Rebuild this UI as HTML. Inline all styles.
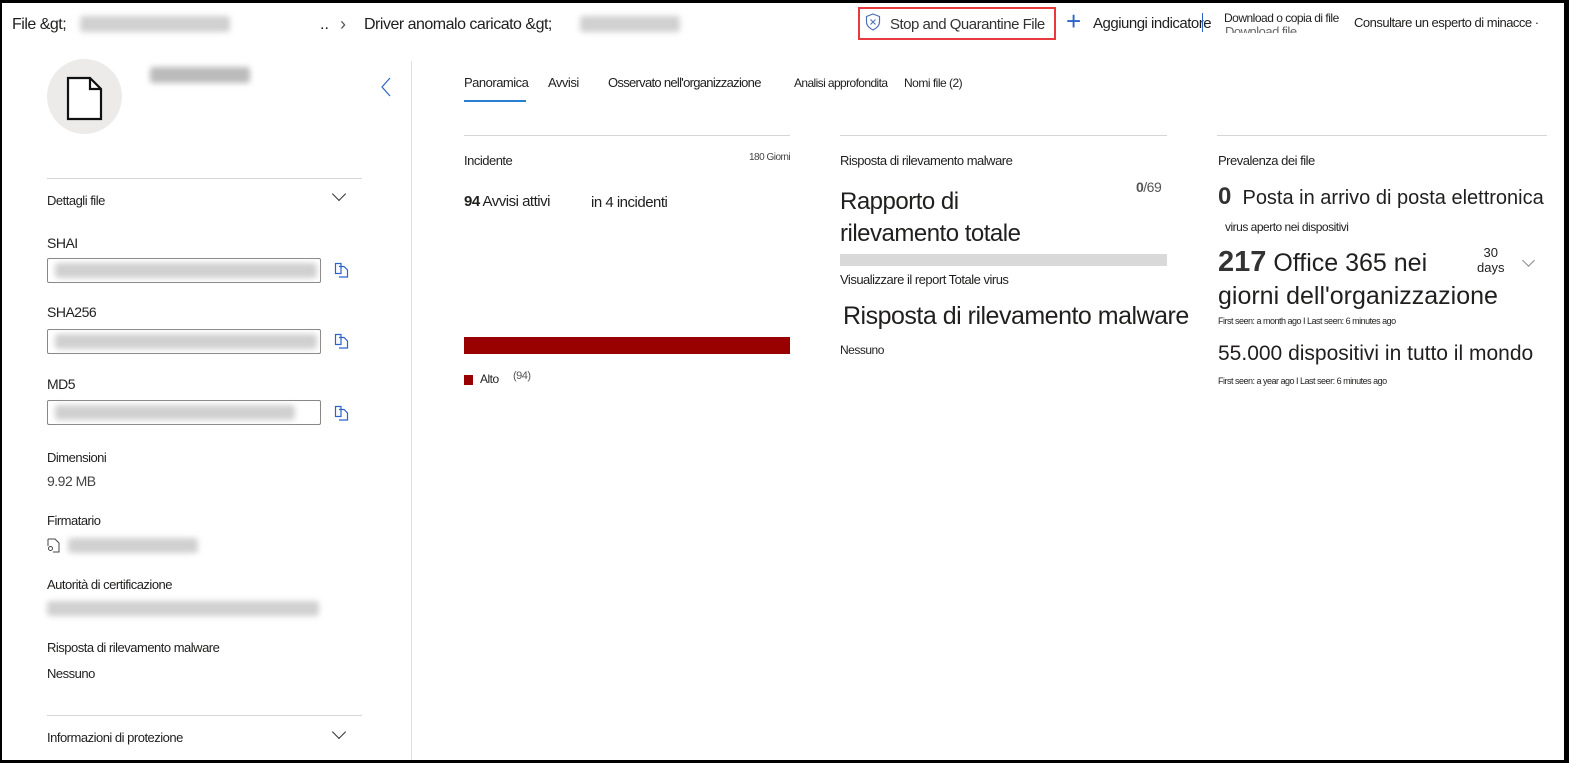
<!DOCTYPE html>
<html><head><meta charset="utf-8"><style>
*{margin:0;padding:0;box-sizing:border-box}
body{width:1569px;height:763px;overflow:hidden;background:#000;font-family:"Liberation Sans",sans-serif;color:#201f1e;position:relative}
#pg{position:absolute;left:2px;top:3px;width:1562px;height:757px;background:#fff;overflow:hidden}
.a{position:absolute;white-space:nowrap}
.c{letter-spacing:-0.5px}
.blur{position:absolute;background:#d0d0d0;filter:blur(3px);border-radius:3px}
.box{position:absolute;border:1px solid #8a8886;border-radius:2px;height:25px;width:274px;left:45px}
.hr{position:absolute;height:1px;background:#d6d6d6}
.chev{position:absolute;width:10px;height:10px;border-right:1.3px solid #333;border-bottom:1.3px solid #333;transform:rotate(45deg)}
</style></head><body><div id="pg">
<div class="a c" style="left:10px;top:13px;font-size:16px">File &amp;gt;</div>
<div class="blur" style="left:78px;top:13px;width:150px;height:16px"></div>
<div class="a" style="left:318px;top:13px;font-size:16px">..</div>
<div class="a" style="left:338px;top:11px;font-size:18px;color:#555">›</div>
<div class="a c" style="left:362px;top:13px;font-size:16px">Driver anomalo caricato &amp;gt;</div>
<div class="blur" style="left:578px;top:13px;width:100px;height:16px"></div>
<div class="a" style="left:856px;top:4px;width:198px;height:33px;border:2px solid #e8393e"></div>
<svg class="a" style="left:863px;top:10px" width="16" height="18" viewBox="0 0 16 18"><path d="M8 1 L14.5 3.5 V9 C14.5 13 11 15.5 8 17 C5 15.5 1.5 13 1.5 9 V3.5 Z" fill="none" stroke="#4c6fb8" stroke-width="1.2"/><path d="M5.5 6.5 L10.5 11.5 M10.5 6.5 L5.5 11.5" stroke="#4c6fb8" stroke-width="1.1"/></svg>
<div class="a c" style="left:888px;top:13px;font-size:15px;color:#333">Stop and Quarantine File</div>
<div class="a" style="left:1064px;top:3px;font-size:26px;font-weight:200;color:#2b64c8">+</div>
<div class="a c" style="left:1091px;top:12px;font-size:15px">Aggiungi indicatore</div>
<div class="a c" style="left:1223px;top:21px;font-size:13px;color:#666;height:9px;overflow:hidden">Download file</div>
<div class="a" style="left:1200px;top:10px;width:1px;height:19px;background:#2b64c8"></div>
<div class="a c" style="left:1222px;top:8px;font-size:12px">Download o copia di file</div>
<div class="a c" style="left:1352px;top:12px;font-size:13px">Consultare un esperto di minacce ·</div>
<div class="a" style="left:45px;top:56px;width:75px;height:75px;border-radius:50%;background:#edebe9"></div>
<svg class="a" style="left:64px;top:73px" width="38" height="45" viewBox="0 0 38 45"><path d="M2 2 H24 L35 13 V43 H2 Z" fill="#fff" stroke="#111" stroke-width="2.2"/><path d="M24 2 V13 H35" fill="none" stroke="#111" stroke-width="2.2"/></svg>
<div class="blur" style="left:148px;top:64px;width:100px;height:16px;background:#bbb"></div>
<svg class="a" style="left:378px;top:74px" width="12" height="20" viewBox="0 0 12 20"><path d="M10 1 L2 10 L10 19" fill="none" stroke="#2b64c8" stroke-width="1.2"/></svg>
<div class="a" style="left:409px;top:58px;width:1px;height:700px;background:#e1dfdd"></div>
<div class="hr" style="left:45px;top:175px;width:315px"></div>
<div class="a c" style="left:45px;top:190px;font-size:13px">Dettagli file</div>
<div class="chev" style="left:332px;top:186px"></div>
<div class="a c" style="left:45px;top:232px;font-size:14px">SHAI</div>
<div class="box" style="top:255px"></div><div class="blur" style="left:53px;top:260px;width:262px;height:15px"></div>
<div class="a c" style="left:45px;top:301px;font-size:14px">SHA256</div>
<div class="box" style="top:326px"></div><div class="blur" style="left:53px;top:331px;width:262px;height:15px"></div>
<div class="a c" style="left:45px;top:373px;font-size:14px">MD5</div>
<div class="box" style="top:397px"></div><div class="blur" style="left:53px;top:402px;width:240px;height:15px"></div>
<svg class="a" style="left:332px;top:259px" width="16" height="16" viewBox="0 0 16 16"><path d="M1.5 1.5 H7 V11.5 H1.5 Z M5 4.5 H10 L13.5 8 V15 H5" fill="none" stroke="#2b64c8" stroke-width="1.2"/></svg>
<svg class="a" style="left:332px;top:330px" width="16" height="16" viewBox="0 0 16 16"><path d="M1.5 1.5 H7 V11.5 H1.5 Z M5 4.5 H10 L13.5 8 V15 H5" fill="none" stroke="#2b64c8" stroke-width="1.2"/></svg>
<svg class="a" style="left:332px;top:402px" width="16" height="16" viewBox="0 0 16 16"><path d="M1.5 1.5 H7 V11.5 H1.5 Z M5 4.5 H10 L13.5 8 V15 H5" fill="none" stroke="#2b64c8" stroke-width="1.2"/></svg>
<div class="a c" style="left:45px;top:447px;font-size:13px">Dimensioni</div>
<div class="a c" style="left:45px;top:470px;font-size:14px;color:#444">9.92 MB</div>
<div class="a c" style="left:45px;top:510px;font-size:13px">Firmatario</div>
<svg class="a" style="left:45px;top:535px" width="14" height="15" viewBox="0 0 14 15"><path d="M1 1 H8 L12 5 V14 H6 M1 1 V8" fill="none" stroke="#444"/><circle cx="3.5" cy="10.5" r="2" fill="none" stroke="#444"/></svg>
<div class="blur" style="left:66px;top:535px;width:130px;height:15px"></div>
<div class="a c" style="left:45px;top:574px;font-size:13px">Autorità di certificazione</div>
<div class="blur" style="left:45px;top:598px;width:272px;height:15px"></div>
<div class="a c" style="left:45px;top:637px;font-size:13px">Risposta di rilevamento malware</div>
<div class="a c" style="left:45px;top:663px;font-size:13px">Nessuno</div>
<div class="hr" style="left:45px;top:712px;width:315px"></div>
<div class="a c" style="left:45px;top:727px;font-size:13px">Informazioni di protezione</div>
<div class="chev" style="left:332px;top:724px"></div>
<div class="a c" style="left:462px;top:72px;font-size:13px">Panoramica</div>
<div class="a" style="left:462px;top:97px;width:62px;height:2px;background:#2b7cd3"></div>
<div class="a c" style="left:546px;top:72px;font-size:13px">Avvisi</div>
<div class="a c" style="left:606px;top:72px;font-size:13px;letter-spacing:-0.7px">Osservato nell'organizzazione</div>
<div class="a c" style="left:792px;top:73px;font-size:12px;letter-spacing:-0.6px">Analisi approfondita</div>
<div class="a c" style="left:902px;top:73px;font-size:12px">Nomi file (2)</div>
<div class="hr" style="left:462px;top:132px;width:326px"></div>
<div class="a c" style="left:462px;top:150px;font-size:13px">Incidente</div>
<div class="a c" style="left:747px;top:149px;font-size:10px;color:#444">180 Giorni</div>
<div class="a c" style="left:462px;top:190px;font-size:15px"><b>94</b> Avvisi attivi</div>
<div class="a c" style="left:589px;top:191px;font-size:15px">in 4 incidenti</div>
<div class="a" style="left:462px;top:334px;width:326px;height:17px;background:#990000"></div>
<div class="a" style="left:462px;top:372px;width:9px;height:10px;background:#990000"></div>
<div class="a c" style="left:478px;top:369px;font-size:12px">Alto</div>
<div class="a c" style="left:511px;top:367px;font-size:11px;color:#555">(94)</div>
<div class="hr" style="left:838px;top:132px;width:327px"></div>
<div class="a c" style="left:838px;top:150px;font-size:13px">Risposta di rilevamento malware</div>
<div class="a c" style="left:1134px;top:176px;font-size:14px;color:#555"><b>0</b>/69</div>
<div class="a c" style="left:838px;top:183px;font-size:24px;line-height:32px">Rapporto di<br>rilevamento totale</div>
<div class="a" style="left:838px;top:251px;width:327px;height:12px;background:#d9d9d9"></div>
<div class="a c" style="left:838px;top:269px;font-size:13px">Visualizzare il report Totale virus</div>
<div class="a" style="left:841px;top:299px;font-size:25px;letter-spacing:-0.5px">Risposta di rilevamento malware</div>
<div class="a c" style="left:838px;top:340px;font-size:12px">Nessuno</div>
<div class="hr" style="left:1215px;top:132px;width:330px"></div>
<div class="a c" style="left:1216px;top:150px;font-size:13px">Prevalenza dei file</div>
<div class="a" style="left:1216px;top:180px;font-size:20px"><b style="font-size:24px;color:#333">0</b>&nbsp; Posta in arrivo di posta elettronica</div>
<div class="a c" style="left:1223px;top:217px;font-size:12px">virus aperto nei dispositivi</div>
<div class="a" style="left:1216px;top:243px;font-size:25px;line-height:33px"><b style="font-size:29px;color:#333">217</b> Office 365 nei<br>giorni dell'organizzazione</div>
<div class="a" style="left:1475px;top:242px;font-size:13px;text-align:center;line-height:15px">30<br>days</div>
<div class="chev" style="left:1522px;top:253px;width:9px;height:9px;border-color:#888"></div>
<div class="a c" style="left:1216px;top:313px;font-size:9px">First seen: a month ago I Last seen: 6 minutes ago</div>
<div class="a" style="left:1216px;top:339px;font-size:21px">55.000 dispositivi in tutto il mondo</div>
<div class="a c" style="left:1216px;top:373px;font-size:9px">First seen: a year ago I Last seer: 6 minutes ago</div>
</div></body></html>
